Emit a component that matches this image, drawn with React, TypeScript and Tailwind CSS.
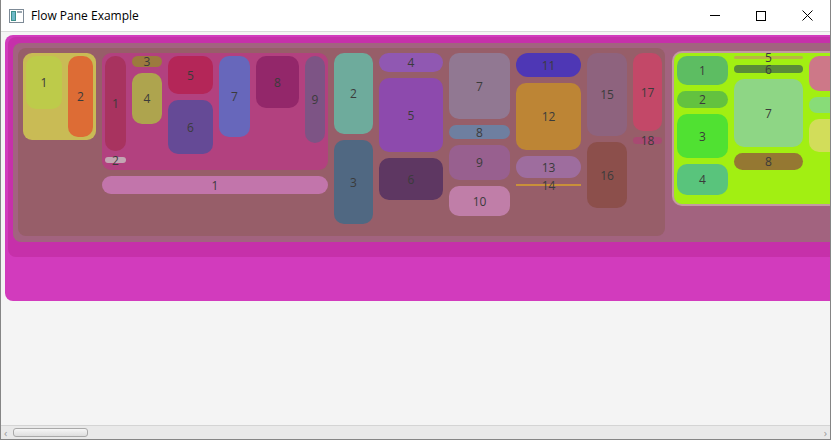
import React from "react";

type BoxProps = { cls: string; t?: string };

// one coloured cell with its centred number
const Cell = ({ cls, t }: BoxProps) => (
  <div className={`shrink-0 flex items-center justify-center text-[12px] leading-[11px] text-[#3b3b3b] ${cls}`}>
    {t}
  </div>
);

const Col = ({ children, cls = "" }: { children: React.ReactNode; cls?: string }) => (
  <div className={`flex flex-col gap-[6px] shrink-0 ${cls}`}>{children}</div>
);

const AppIcon = () => (
  <svg width="15" height="14" viewBox="0 0 15 14">
    <rect x="0.5" y="0.5" width="14" height="13" fill="#fff" stroke="#7d8a96" />
    <rect x="2" y="2" width="5" height="10" fill="#3d8f8a" />
    <rect x="3" y="3" width="3" height="8" fill="#6fb8c8" />
    <rect x="8" y="2" width="5" height="2" fill="#9aa6b0" />
  </svg>
);

const App = () => {
  return (
    <div
      className="w-[831px] h-[440px] flex flex-col bg-white border-x border-b border-[#858585] overflow-hidden"
      style={{ fontFamily: '"Open Sans", "Noto Sans", sans-serif' }}
    >
      {/* title bar */}
      <div className="h-[32px] shrink-0 flex items-center border-b border-[#dadada] bg-white">
        <div className="ml-[8px] mr-[7px] flex items-center">
          <AppIcon />
        </div>
        <span className="text-[12px] text-black">Flow Pane Example</span>
        <div className="ml-auto flex items-center h-full">
          <div className="w-[46px] h-full flex items-center justify-center">
            <div className="w-[10px] h-px bg-black" />
          </div>
          <div className="w-[46px] h-full flex items-center justify-center">
            <div className="w-[10px] h-[10px] border border-black" />
          </div>
          <div className="w-[46px] h-full flex items-center justify-center">
            <svg width="11" height="11" viewBox="0 0 11 11">
              <path d="M0.5 0.5 L10.5 10.5 M10.5 0.5 L0.5 10.5" stroke="#000" strokeWidth="1" />
            </svg>
          </div>
        </div>
      </div>

      {/* content */}
      <div className="flex-1 bg-[#f4f4f4] overflow-hidden pl-[4px] pt-[3px]">
        <div className="w-[900px] h-[266px] rounded-[8px] bg-[#d23bbd] pt-[2px] pl-[3px]">
          <div className="h-[220px] rounded-[8px] bg-[#c630aa] pt-[6px] pl-[5px]">
            <div className="h-[199px] rounded-[8px] bg-[#a2637f] pt-[5px] pl-[5px] flex items-start gap-[7px]">
              {/* main flow pane */}
              <div className="w-[647px] h-[188px] shrink-0 rounded-[8px] bg-[#975e69] p-[5px] flex items-start gap-[6px]">
                {/* yellow group */}
                <div className="w-[73px] h-[87px] shrink-0 rounded-[9px] bg-[#c9bb55] p-[3px] flex items-start gap-[6px]">
                  <Cell cls="w-[36px] h-[53px] rounded-[10px] bg-[#bdcb4a]" t="1" />
                  <Cell cls="w-[25px] h-[81px] rounded-[10px] bg-[#dd6c35]" t="2" />
                </div>

                {/* pink group */}
                <Col>
                  <div className="w-[226px] h-[117px] rounded-[9px] bg-[#b2417f] p-[3px] flex items-start gap-[6px]">
                    <Col>
                      <Cell cls="w-[21px] h-[95px] rounded-[10px] bg-[#a8335f]" t="1" />
                      <Cell cls="w-[21px] h-[6px] rounded-full bg-[#c3a6b3]" t="2" />
                    </Col>
                    <Col>
                      <Cell cls="w-[30px] h-[11px] rounded-full bg-[#9c7a3e]" t="3" />
                      <Cell cls="w-[30px] h-[51px] rounded-[10px] bg-[#aea44e]" t="4" />
                    </Col>
                    <Col>
                      <Cell cls="w-[45px] h-[38px] rounded-[10px] bg-[#b42658]" t="5" />
                      <Cell cls="w-[45px] h-[54px] rounded-[10px] bg-[#654a96]" t="6" />
                    </Col>
                    <Cell cls="w-[31px] h-[81px] rounded-[10px] bg-[#6767bb]" t="7" />
                    <Cell cls="w-[43px] h-[52px] rounded-[10px] bg-[#93276a]" t="8" />
                    <Cell cls="w-[20px] h-[87px] rounded-[10px] bg-[#7d5485]" t="9" />
                  </div>
                  <Cell cls="w-[226px] h-[18px] rounded-full bg-[#c275ab]" t="1" />
                </Col>

                <Col>
                  <Cell cls="w-[39px] h-[81px] rounded-[10px] bg-[#6eab9c]" t="2" />
                  <Cell cls="w-[39px] h-[84px] rounded-[10px] bg-[#506882]" t="3" />
                </Col>
                <Col>
                  <Cell cls="w-[64px] h-[19px] rounded-full bg-[#9058b2]" t="4" />
                  <Cell cls="w-[64px] h-[74px] rounded-[10px] bg-[#8d4aad]" t="5" />
                  <Cell cls="w-[64px] h-[42px] rounded-[10px] bg-[#5e3762]" t="6" />
                </Col>
                <Col>
                  <Cell cls="w-[61px] h-[66px] rounded-[10px] bg-[#917892]" t="7" />
                  <Cell cls="w-[61px] h-[14px] rounded-full bg-[#6e7fa0]" t="8" />
                  <Cell cls="w-[61px] h-[35px] rounded-[10px] bg-[#98608f]" t="9" />
                  <Cell cls="w-[61px] h-[30px] rounded-[10px] bg-[#c07ea8]" t="10" />
                </Col>
                <Col>
                  <Cell cls="w-[65px] h-[24px] rounded-[12px] bg-[#4e37b5]" t="11" />
                  <Cell cls="w-[65px] h-[67px] rounded-[10px] bg-[#bd8535]" t="12" />
                  <Cell cls="w-[65px] h-[22px] rounded-full bg-[#9e6d9e]" t="13" />
                  <Cell cls="w-[65px] h-[2px] bg-[#c9903a]" t="14" />
                </Col>
                <Col>
                  <Cell cls="w-[40px] h-[83px] rounded-[10px] bg-[#8e637e]" t="15" />
                  <Cell cls="w-[40px] h-[66px] rounded-[10px] bg-[#8c4f4b]" t="16" />
                </Col>
                <Col>
                  <Cell cls="w-[29px] h-[78px] rounded-[10px] bg-[#c34868]" t="17" />
                  <Cell cls="w-[29px] h-[7px] rounded-full bg-[#a84a72]" t="18" />
                </Col>
              </div>

              {/* green flow pane */}
              <div className="mt-[3px] shrink-0 rounded-[10px] bg-[#c49aa1] p-[2px]">
                <div className="w-[300px] h-[151px] rounded-[8px] bg-[#a2ef12] p-[3px] flex items-start gap-[6px]">
                  <Col>
                    <Cell cls="w-[51px] h-[29px] rounded-[10px] bg-[#5dbd62]" t="1" />
                    <Cell cls="w-[51px] h-[17px] rounded-full bg-[#63c23f]" t="2" />
                    <Cell cls="w-[51px] h-[44px] rounded-[10px] bg-[#50e132]" t="3" />
                    <Cell cls="w-[51px] h-[31px] rounded-[10px] bg-[#59c47c]" t="4" />
                  </Col>
                  <Col>
                    <Cell cls="w-[69px] h-[3px] rounded-full bg-[#b9b445]" t="5" />
                    <Cell cls="w-[69px] h-[8px] rounded-full bg-[#5a8c38]" t="6" />
                    <Cell cls="w-[69px] h-[68px] rounded-[10px] bg-[#8ed685]" t="7" />
                    <Cell cls="w-[69px] h-[17px] rounded-full bg-[#957832]" t="8" />
                  </Col>
                  <Col>
                    <Cell cls="w-[60px] h-[35px] rounded-[10px] bg-[#cd7888]" />
                    <Cell cls="w-[60px] h-[16px] rounded-full bg-[#88dc78]" />
                    <Cell cls="w-[60px] h-[33px] rounded-[10px] bg-[#d2dd5a]" />
                  </Col>
                </div>
              </div>
            </div>
          </div>
        </div>
      </div>

      {/* horizontal scrollbar */}
      <div className="h-[14px] shrink-0 flex items-center border-t border-[#d4d4d4] bg-[#e9e9e9] px-[3px]">
        <span className="text-[11px] leading-none text-[#9a9a9a]">‹</span>
        <div className="ml-[6px] w-[75px] h-[9px] rounded-[3px] border border-[#a9a9a9] bg-gradient-to-b from-[#f6f6f6] to-[#dedede]" />
        <span className="ml-auto text-[11px] leading-none text-[#9a9a9a]">›</span>
      </div>
    </div>
  );
};

export default App;
